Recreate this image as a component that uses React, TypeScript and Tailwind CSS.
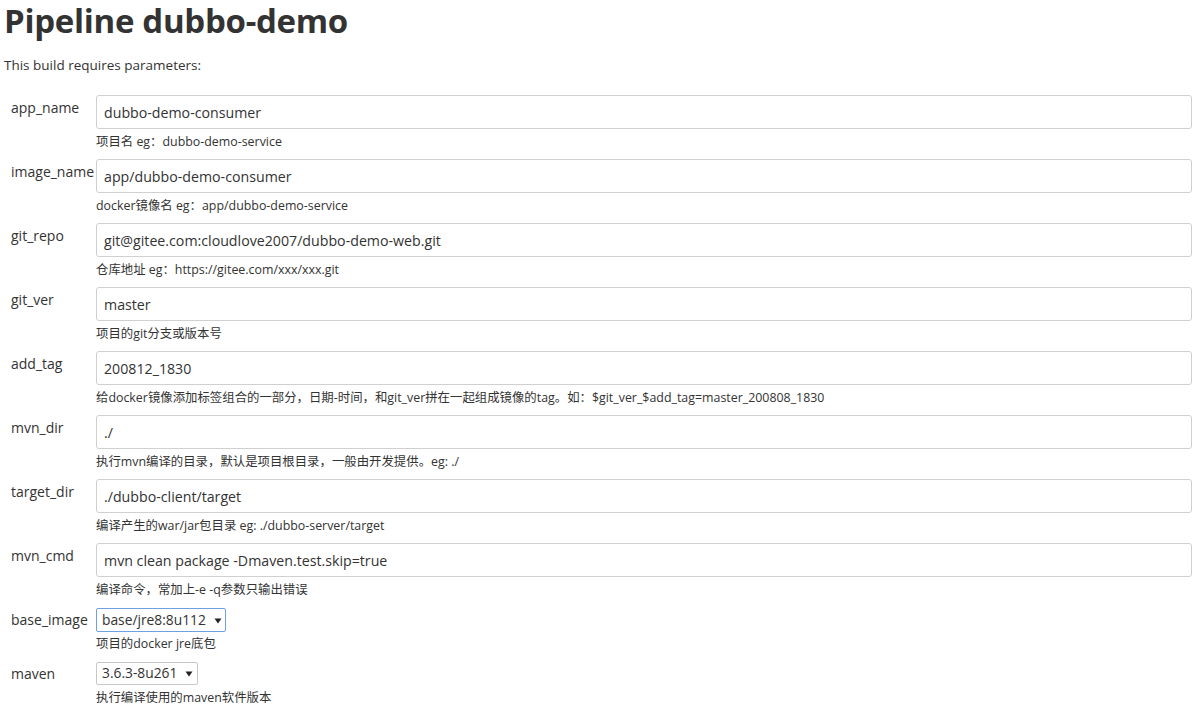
import React from "react";

type Row = { name: string; value: string; help: string };

const rows: Row[] = [
  { name: "app_name", value: "dubbo-demo-consumer", help: "项目名 eg：dubbo-demo-service" },
  { name: "image_name", value: "app/dubbo-demo-consumer", help: "docker镜像名 eg：app/dubbo-demo-service" },
  { name: "git_repo", value: "git@gitee.com:cloudlove2007/dubbo-demo-web.git", help: "仓库地址 eg：https://gitee.com/xxx/xxx.git" },
  { name: "git_ver", value: "master", help: "项目的git分支或版本号" },
  { name: "add_tag", value: "200812_1830", help: "给docker镜像添加标签组合的一部分，日期-时间，和git_ver拼在一起组成镜像的tag。如：$git_ver_$add_tag=master_200808_1830" },
  { name: "mvn_dir", value: "./", help: "执行mvn编译的目录，默认是项目根目录，一般由开发提供。eg: ./" },
  { name: "target_dir", value: "./dubbo-client/target", help: "编译产生的war/jar包目录 eg: ./dubbo-server/target" },
  { name: "mvn_cmd", value: "mvn clean package -Dmaven.test.skip=true", help: "编译命令，常加上-e -q参数只输出错误" },
];

const font = { fontFamily: '"Open Sans", "Noto Sans CJK SC", sans-serif' };

function Caret() {
  return (
    <svg width="8" height="6" viewBox="0 0 8 6" className="ml-[8px] mt-[1px]">
      <path d="M0.5 0.5 L7.5 0.5 L4 5.5 Z" fill="#222" />
    </svg>
  );
}

export default function App() {
  return (
    <div className="min-h-screen bg-white text-[#333] pl-[4px] pr-[7px]" style={font}>
      <h1 className="m-0 font-bold text-[33px] leading-[44px] tracking-[-0.3px] -mt-[1px]">Pipeline dubbo-demo</h1>
      <p className="text-[13.5px] leading-[20px] mt-[12px] mb-[20px]">This build requires parameters:</p>
      <div className="flex flex-col">
        {rows.map((r) => (
          <div key={r.name} className="flex h-[64px]">
            <div className="w-[92px] shrink-0 pl-[7px] pt-[3px] text-[14px] leading-[20px] whitespace-nowrap">{r.name}</div>
            <div className="flex-1 flex flex-col">
              <div className="h-[34px] border border-[#d0d0d0] rounded-[3px] flex items-center px-[7px] pt-[1px] text-[14.2px] text-[#333]">
                {r.value}
              </div>
              <div className="text-[12.4px] leading-[16px] mt-[5px] text-[#333] whitespace-nowrap">{r.help}</div>
            </div>
          </div>
        ))}
        <div className="flex h-[54px] mt-[1px]">
          <div className="w-[92px] shrink-0 pl-[7px] pt-[2px] text-[14px] leading-[20px]">base_image</div>
          <div className="flex flex-col">
            <div className="h-[24px] w-[130px] border border-[#6fa0e0] rounded-[2px] flex items-center pl-[5px] text-[13.8px]">
              base/jre8:8u112
              <Caret />
            </div>
            <div className="text-[12.4px] leading-[16px] mt-[4px]">项目的docker jre底包</div>
          </div>
        </div>
        <div className="flex h-[54px]">
          <div className="w-[92px] shrink-0 pl-[7px] pt-[2px] text-[14px] leading-[20px]">maven</div>
          <div className="flex flex-col">
            <div className="h-[23px] w-[102px] border border-[#c8c8c8] rounded-[2px] flex items-center pl-[5px] text-[13.8px]">
              3.6.3-8u261
              <Caret />
            </div>
            <div className="text-[12.4px] leading-[16px] mt-[5px]">执行编译使用的maven软件版本</div>
          </div>
        </div>
      </div>
    </div>
  );
}
